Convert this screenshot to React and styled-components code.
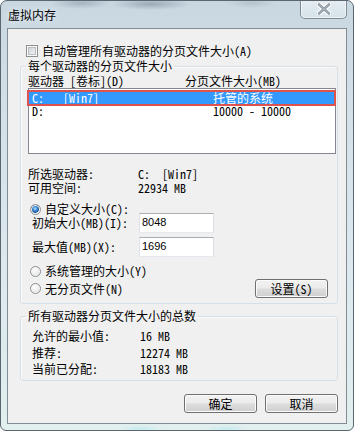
import React from 'react';
import styled, { createGlobalStyle } from 'styled-components';

const CJK = `"Noto Sans Mono CJK SC", "Noto Sans CJK SC", sans-serif`;

const Global = createGlobalStyle`
  html, body { margin: 0; padding: 0; background: #ffffff; }
  body { font-family: ${CJK}; font-size: 12px; color: #000; }
  * { box-sizing: border-box; }
`;

const Window = styled.div`
  width: 354px;
  height: 431px;
  border: 1px solid #5b6670;
  border-radius: 7px 7px 6px 6px;
  background:
    radial-gradient(ellipse 30px 6px at 80px 2px, rgba(120,135,150,0.45), rgba(120,135,150,0) 100%),
    radial-gradient(ellipse 40px 6px at 150px 3px, rgba(110,125,140,0.5), rgba(110,125,140,0) 100%),
    radial-gradient(ellipse 25px 5px at 250px 2px, rgba(140,155,165,0.35), rgba(140,155,165,0) 100%),
    radial-gradient(ellipse 20px 4px at 140px 428px, rgba(190,235,240,0.8), rgba(190,235,240,0) 100%),
    radial-gradient(ellipse 20px 4px at 225px 428px, rgba(190,235,240,0.8), rgba(190,235,240,0) 100%),
    linear-gradient(180deg, #c9d7e1 0%, #d3e0e8 25%, #dce8ee 60%, #e1efee 100%);
  display: flex;
  flex-direction: column;
  overflow: hidden;
  font-family: ${CJK};
`;

const TitleBar = styled.div`
  height: 27px;
  display: flex;
  justify-content: space-between;
  align-items: flex-start;
  flex: none;
`;

const Title = styled.div`
  margin: 8px 0 0 7px;
  font-size: 12px;
  line-height: 12px;
  color: #000;
  text-shadow: 0 0 6px rgba(255, 255, 255, 0.9);
`;

const CloseButton = styled.div`
  width: 47px;
  height: 19px;
  margin: -1px 6px 0 0;
  border: 1px solid #7d8b96;
  border-top: none;
  border-radius: 0 0 5px 5px;
  background: linear-gradient(180deg, rgba(255,255,255,0.55) 0%, rgba(240,246,249,0.5) 50%, rgba(225,236,242,0.5) 100%);
  box-shadow: inset 0 0 0 1px rgba(255,255,255,0.6);
  display: flex;
  align-items: center;
  justify-content: center;
`;

const Client = styled.div`
  margin: 0 6px;
  height: 396px;
  border: 1px solid #838b93;
  background: #f0f0f0;
  padding: 15px 8px 0 12px;
  display: flex;
  flex-direction: column;
`;

const CheckRow = styled.div`
  height: 13px;
  display: flex;
  align-items: center;
  margin-left: 6px;
  line-height: 12px;
`;

const CheckBox = styled.span`
  width: 12px;
  height: 12px;
  border: 1px solid #8e8f8f;
  background: linear-gradient(135deg, #c9cdd2 0%, #e6e8ea 60%, #f7f7f7 100%);
  box-shadow: inset 0 0 0 1px #fbfbfb, inset 0 0 0 2px #b9bec4;
  margin-right: 4px;
  flex: none;
`;

const Group = styled.fieldset`
  margin: ${p => p.$top}px 0 0 0;
  padding: 0 0 ${p => p.$bottom}px 0;
  border: 1px solid #d5dfe5;
  border-radius: 3px;
  box-shadow: inset 1px 1px 0 #fbfbfb;
  min-width: 0;
  display: flex;
  flex-direction: column;
`;

const Legend = styled.legend`
  margin-left: 5px;
  padding: 0 2px;
  font-size: 12px;
  line-height: 12px;
`;

const HeaderRow = styled.div`
  margin-top: 3px;
  height: 12px;
  line-height: 12px;
  padding-left: 7px;
  display: grid;
  grid-template-columns: 157px 1fr;
`;

const ListBox = styled.div`
  margin: 1px 1px 0 7px;
  height: 66px;
  border: 1px solid #828790;
  background: #ffffff;
  padding-top: 3px;
  display: flex;
  flex-direction: column;
`;

const ListRow = styled.div`
  height: ${p => (p.$selected ? 12 : 13)}px;
  line-height: 12px;
  margin-top: ${p => (p.$selected ? 0 : 1)}px;
  margin-right: 1px;
  padding-left: 3px;
  display: grid;
  grid-template-columns: 31px 150px 1fr;
  white-space: pre;
  background: ${p => (p.$selected ? '#3399ff' : 'transparent')};
  color: ${p => (p.$selected ? '#ffffff' : '#000000')};
  outline: ${p => (p.$selected ? '2px solid #e0534d' : 'none')};
`;

const InfoRow = styled.div`
  margin-top: ${p => p.$top}px;
  height: 12px;
  line-height: 12px;
  padding-left: ${p => p.$left}px;
  display: grid;
  grid-template-columns: ${p => p.$label}px 1fr;
  white-space: pre;
`;

const RadioRow = styled.div`
  margin-top: ${p => p.$top}px;
  height: ${p => p.$h}px;
  padding-left: 9px;
  display: flex;
  align-items: center;
  line-height: 12px;
`;

const Radio = styled.span`
  width: 11px;
  height: 11px;
  border-radius: 50%;
  border: 1px solid #8b8f93;
  margin-right: 4px;
  flex: none;
  background: ${p =>
    p.$on
      ? 'radial-gradient(circle at 45% 40%, #b7e2ff 0%, #3a8ad6 30%, #1b4f92 55%, #e9eef2 62%, #f4f4f4 100%)'
      : 'radial-gradient(circle at 40% 35%, #ffffff 0%, #f0f0f0 40%, #d6d9dc 100%)'};
  box-shadow: inset 0 0 0 1px #f6f6f6;
`;

const InputRow = styled.div`
  margin-top: ${p => p.$top}px;
  height: 20px;
  padding-left: 11px;
  display: flex;
  align-items: center;
  line-height: 12px;
`;

const InputLabel = styled.span`
  width: 107px;
  flex: none;
`;

const TextBox = styled.div`
  width: 75px;
  height: 20px;
  border: 1px solid;
  border-color: #abadb3 #dbdfe6 #e3e9ef #e2e3ea;
  background: #ffffff;
  padding-left: 2px;
  font-family: "Liberation Sans", Arial, sans-serif;
  font-size: 11px;
  line-height: 16px;
  color: #000;
`;

const Button = styled.div`
  width: 73px;
  height: 19px;
  margin-left: ${p => (p.$auto ? 'auto' : '0')};
  margin-right: ${p => p.$right || 0}px;
  border: 1px solid #707070;
  border-radius: 3px;
  background: linear-gradient(180deg, #f2f2f2 0%, #ebebeb 48%, #dddddd 52%, #cfcfcf 100%);
  box-shadow: inset 0 0 0 1px #fbfbfb;
  display: flex;
  align-items: center;
  justify-content: center;
  font-size: 12px;
  line-height: 12px;
  flex: none;
`;

const BottomRow = styled.div`
  margin-top: 1px;
  height: 19px;
  padding-left: 9px;
  display: flex;
  align-items: center;
  line-height: 12px;
`;

const ButtonRow = styled.div`
  margin-top: 13px;
  display: flex;
  justify-content: flex-end;
  gap: 8px;
`;

const CloseIcon = () => (
  <svg width="14" height="12" viewBox="0 0 14 12">
    <path d="M2 1.5 L12 10.5 M12 1.5 L2 10.5" stroke="#ffffff" strokeWidth="5" strokeLinecap="round" />
    <path d="M2 1.5 L12 10.5 M12 1.5 L2 10.5" stroke="#8d9aa4" strokeWidth="2.6" strokeLinecap="round" />
    <path d="M2.6 2 L11.4 10 M11.4 2 L2.6 10" stroke="#a9b4bc" strokeWidth="1" strokeLinecap="round" />
  </svg>
);

export default function App() {
  return (
    <>
      <Global />
      <Window>
        <TitleBar>
          <Title>虚拟内存</Title>
          <CloseButton>
            <CloseIcon />
          </CloseButton>
        </TitleBar>
        <Client>
          <CheckRow>
            <CheckBox />
            <span>自动管理所有驱动器的分页文件大小(A)</span>
          </CheckRow>

          <Group $top={3} $bottom={5}>
            <Legend>每个驱动器的分页文件大小</Legend>
            <HeaderRow>
              <span>驱动器 [卷标](D)</span>
              <span>分页文件大小(MB)</span>
            </HeaderRow>
            <ListBox>
              <ListRow $selected>
                <span>C:</span>
                <span>[Win7]</span>
                <span>托管的系统</span>
              </ListRow>
              <ListRow>
                <span>D:</span>
                <span></span>
                <span>10000 - 10000</span>
              </ListRow>
            </ListBox>
            <InfoRow $top={14} $left={7} $label={110}>
              <span>所选驱动器:</span>
              <span>C:  [Win7]</span>
            </InfoRow>
            <InfoRow $top={2} $left={7} $label={110}>
              <span>可用空间:</span>
              <span>22934 MB</span>
            </InfoRow>
            <RadioRow $top={7} $h={16}>
              <Radio $on />
              <span>自定义大小(C):</span>
            </RadioRow>
            <InputRow $top={-4}>
              <InputLabel>初始大小(MB)(I):</InputLabel>
              <TextBox>8048</TextBox>
            </InputRow>
            <InputRow $top={4}>
              <InputLabel>最大值(MB)(X):</InputLabel>
              <TextBox>1696</TextBox>
            </InputRow>
            <RadioRow $top={7} $h={14}>
              <Radio />
              <span>系统管理的大小(Y)</span>
            </RadioRow>
            <BottomRow>
              <Radio />
              <span>无分页文件(N)</span>
              <Button $auto $right={9}>设置(S)</Button>
            </BottomRow>
          </Group>

          <Group $top={6} $bottom={5}>
            <Legend>所有驱动器分页文件大小的总数</Legend>
            <InfoRow $top={8} $left={11} $label={108}>
              <span>允许的最小值:</span>
              <span>16 MB</span>
            </InfoRow>
            <InfoRow $top={5} $left={11} $label={108}>
              <span>推荐:</span>
              <span>12274 MB</span>
            </InfoRow>
            <InfoRow $top={4} $left={11} $label={108}>
              <span>当前已分配:</span>
              <span>18183 MB</span>
            </InfoRow>
          </Group>

          <ButtonRow>
            <Button>确定</Button>
            <Button>取消</Button>
          </ButtonRow>
        </Client>
      </Window>
    </>
  );
}
